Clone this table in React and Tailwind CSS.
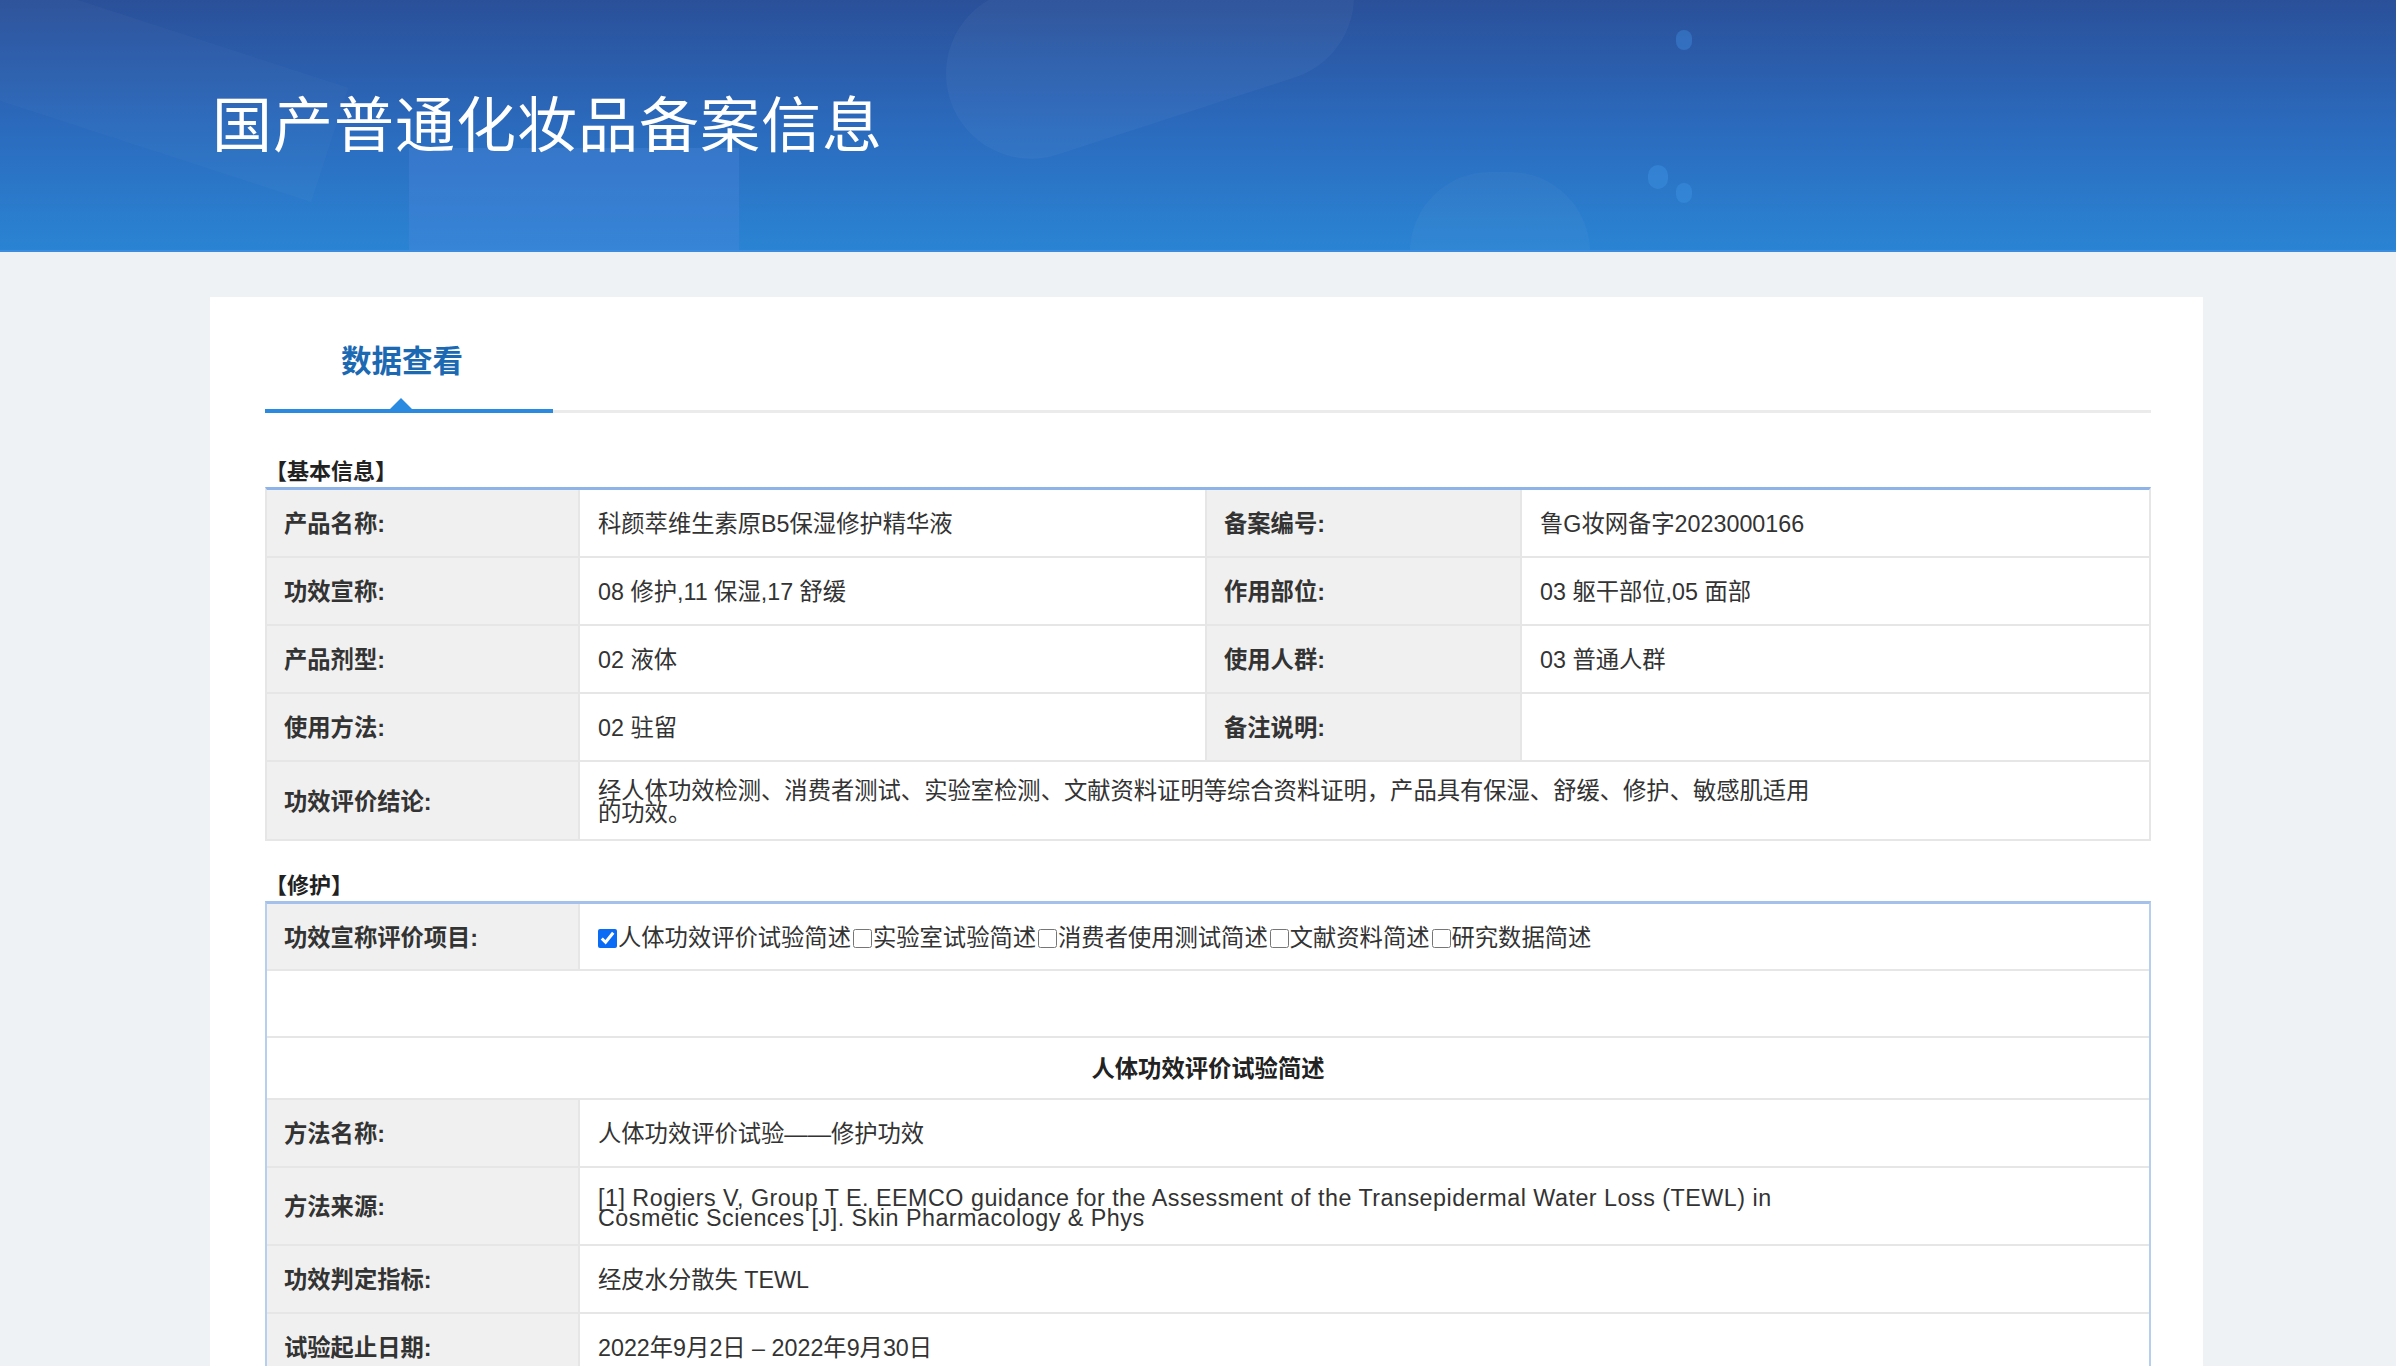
import React from "react";

const FONT = { fontFamily: '"Liberation Sans", "Noto Sans CJK SC", sans-serif' };

function Label({ children, className = "" }) {
  return (
    <div
      className={
        "w-[313px] shrink-0 bg-[#f0f0f0] border-r-2 border-[#e6e6e6] flex items-center pl-[17px] pt-[3px] text-[23.3px] font-bold text-[#333]" +
        " " +
        className
      }
    >
      {children}
    </div>
  );
}

function Value({ children, className = "" }) {
  return (
    <div className={"flex items-center pl-[18px] pt-[3px] text-[23.3px] text-[#333] " + className}>
      {children}
    </div>
  );
}

function Row4({ l1, v1, l2, v2 }) {
  return (
    <div className="flex h-[68px] border-b-2 border-[#e6e6e6]">
      <Label>{l1}</Label>
      <Value className="w-[627px] shrink-0 border-r-2 border-[#e6e6e6]">{v1}</Value>
      <Label className="w-[315px]">{l2}</Label>
      <Value className="flex-1">{v2}</Value>
    </div>
  );
}

function Row2({ label, children, h = "h-[68px]", last = false }) {
  return (
    <div className={"flex " + h + (last ? "" : " border-b-2 border-[#e6e6e6]")}>
      <Label>{label}</Label>
      <Value className="flex-1">{children}</Value>
    </div>
  );
}

function Check({ checked, children, first = false }) {
  return (
    <span className="inline-flex items-center">
      <input
        type="checkbox"
        checked={checked}
        readOnly
        className={
          "w-[19px] h-[19px] mr-[1px] my-0 accent-[#0a6cf5] " + (first ? "ml-0" : "ml-[2px]")
        }
      />
      <span>{children}</span>
    </span>
  );
}

export default function App() {
  return (
    <div className="min-h-screen bg-[#eff2f5] pb-[60px]" style={FONT}>
      <header className="relative h-[252px] overflow-hidden border-b-2 border-[#3a8ddf] bg-gradient-to-b from-[#2a5099] via-[#2b6abd] to-[#2a84d3]">
        {/* decorative shapes */}
        <div className="absolute left-[-80px] top-[20px] w-[420px] h-[120px] bg-white/[0.025] rotate-[18deg]" />
        <div className="absolute left-[409px] top-[148px] w-[330px] h-[140px] bg-[#4c87dc]/35" />
        <div className="absolute left-[940px] top-[-50px] w-[420px] h-[170px] rounded-[85px] bg-white/[0.035] rotate-[-18deg]" />
        <div className="absolute left-[1410px] top-[172px] w-[180px] h-[160px] rounded-full bg-white/[0.03]" />
        <div className="absolute left-[1676px] top-[30px] w-[16px] h-[20px] rounded-full bg-[#3b86d8]/50" />
        <div className="absolute left-[1648px] top-[165px] w-[20px] h-[24px] rounded-full bg-[#3b8fe0]/50" />
        <div className="absolute left-[1676px] top-[183px] w-[16px] h-[20px] rounded-full bg-[#3b8fe0]/50" />
        <div className="relative h-full flex items-center pl-[212px] pt-[4px]">
          <h1 className="text-[60px] leading-none text-white font-normal tracking-[1px]">
            国产普通化妆品备案信息
          </h1>
        </div>
      </header>

      <main className="pt-[45px] pl-[210px]">
        <div className="w-[1993px] bg-white pl-[55px] pr-[52px] pt-[44px] pb-[60px]">
          {/* tab */}
          <div className="w-[288px] h-[40px] leading-[40px] pl-[76px] text-[30.5px] font-bold text-[#1c69b3]">
            数据查看
          </div>
          <div className="relative mt-[28px] h-[4px]">
            <div className="absolute left-0 right-0 top-[1px] h-[3px] bg-[#ebebeb]" />
            <div className="absolute left-0 top-0 w-[288px] h-[4px] bg-[#2a8ae0]" />
            <div className="absolute left-[125px] top-[-11px] w-0 h-0 border-l-[11px] border-r-[11px] border-b-[11px] border-l-transparent border-r-transparent border-b-[#2a8ae0]" />
          </div>

          {/* basic info */}
          <div className="mt-[44px] h-[30px] leading-[30px] text-[22px] font-bold text-[#222]">
            【基本信息】
          </div>
          <div className="border-2 border-t-[3px] border-[#e6e6e6] border-t-[#8db3e8]">
            <Row4 l1="产品名称:" v1="科颜萃维生素原B5保湿修护精华液" l2="备案编号:" v2="鲁G妆网备字2023000166" />
            <Row4 l1="功效宣称:" v1="08 修护,11 保湿,17 舒缓" l2="作用部位:" v2="03 躯干部位,05 面部" />
            <Row4 l1="产品剂型:" v1="02 液体" l2="使用人群:" v2="03 普通人群" />
            <Row4 l1="使用方法:" v1="02 驻留" l2="备注说明:" v2="" />
            <Row2 label="功效评价结论:" h="h-[77px]" last>
              <div className="leading-[22px]">
                经人体功效检测、消费者测试、实验室检测、文献资料证明等综合资料证明，产品具有保湿、舒缓、修护、敏感肌适用
                <br />
                的功效。
              </div>
            </Row2>
          </div>

          {/* repair */}
          <div className="mt-[30px] h-[30px] leading-[30px] text-[22px] font-bold text-[#222]">
            【修护】
          </div>
          <div className="border-2 border-t-[3px] border-b-0 border-[#b7cfef] border-t-[#a3c1eb]">
            <Row2 label="功效宣称评价项目:" h="h-[67px]">
              <div className="flex items-center">
                <Check checked first>人体功效评价试验简述</Check>
                <Check>实验室试验简述</Check>
                <Check>消费者使用测试简述</Check>
                <Check>文献资料简述</Check>
                <Check>研究数据简述</Check>
              </div>
            </Row2>
            <div className="h-[67px] border-b-2 border-[#e6e6e6]" />
            <div className="h-[62px] pt-[3px] border-b-2 border-[#e6e6e6] flex items-center justify-center text-[23.3px] font-bold text-[#222]">
              人体功效评价试验简述
            </div>
            <Row2 label="方法名称:">人体功效评价试验——修护功效</Row2>
            <Row2 label="方法来源:" h="h-[78px]">
              <div className="leading-[20px] tracking-[0.5px]">
                [1] Rogiers V, Group T E. EEMCO guidance for the Assessment of the Transepidermal Water Loss (TEWL) in
                <br />
                Cosmetic Sciences [J]. Skin Pharmacology &amp; Phys
              </div>
            </Row2>
            <Row2 label="功效判定指标:">经皮水分散失 TEWL</Row2>
            <Row2 label="试验起止日期:">2022年9月2日 – 2022年9月30日</Row2>
            <Row2 label="受试物使用方法:">每日早晚各使用一次</Row2>
            <Row2 label="样本量:">33</Row2>
          </div>
        </div>
      </main>
    </div>
  );
}
